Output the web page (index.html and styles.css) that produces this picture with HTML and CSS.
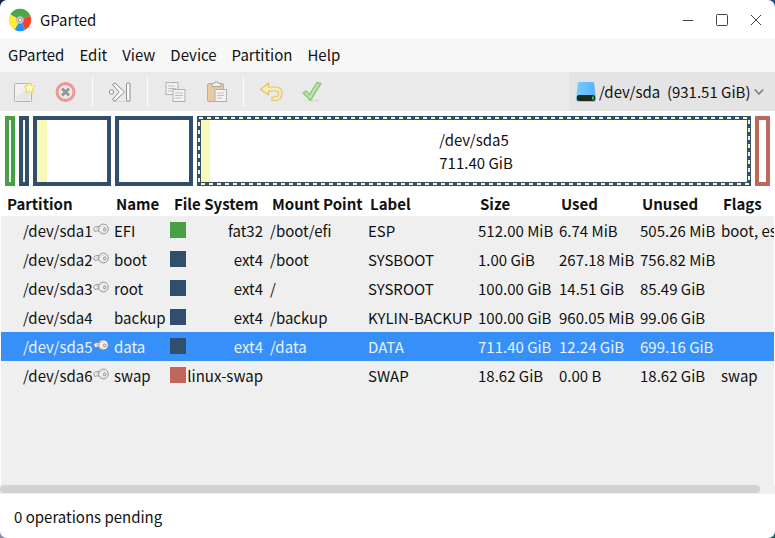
FILE: index.html
```html
<!DOCTYPE html>
<html lang="en">
<head>
<meta charset="utf-8">
<title>GParted</title>
<link rel="stylesheet" href="styles.css">
</head>
<body>
<svg class="defs" aria-hidden="true">
  <symbol id="key" viewBox="1 0 17 14">
    <path d="M10 4.500H4L1.600 6.700L3 9.500H4.500L5.500 8.500L7 9.500H10" fill="#f4f4f4" stroke="#8d8d8d"/>
    <circle cx="12" cy="7" r="5.200" fill="#f4f4f4" stroke="#8d8d8d"/>
    <circle cx="11" cy="7.300" r="3.400" fill="none" stroke="#d4d4d4"/>
    <circle cx="13.400" cy="7.500" r="1.500" fill="#e4e4e4" stroke="#8d8d8d"/>
    <path d="M4 6.500h5" stroke="#c4c4c4"/>
  </symbol>
</svg>
<div class="window">
  <header class="titlebar">
    <svg class="logo" width="24" height="24" viewBox="0 0 24 24" aria-hidden="true">
      <path d="M12 12L2.300 6.400A11.200 11.200 0 0 1 22.300 7.700Z" fill="#4aa84a"/>
      <path d="M12 12L22.300 7.700A11.200 11.200 0 0 1 17.500 21.800Z" fill="#f8402f"/>
      <path d="M12 12L17.500 21.800A11.200 11.200 0 0 1 6.500 21.800Z" fill="#2592f5"/>
      <path d="M12 12L6.500 21.800A11.200 11.200 0 0 1 2.300 6.400Z" fill="#ffe93b"/>
      <circle cx="12" cy="12" r="3.400" fill="#e8e8e8" stroke="#b5b0a8"/>
      <circle cx="12" cy="12" r="1.800" fill="#fff" stroke="#8f8f8f"/>
    </svg>
    <h1>GParted</h1>
    <div class="controls">
      <button type="button" aria-label="Minimize"><svg width="14" height="14" viewBox="0 0 14 14"><path d="M2 7.500h10" stroke="#444"/></svg></button>
      <button type="button" aria-label="Maximize"><svg width="14" height="14" viewBox="0 0 14 14"><rect x="1.500" y="1.500" width="11" height="11" rx="1" fill="none" stroke="#444"/></svg></button>
      <button type="button" aria-label="Close"><svg width="14" height="14" viewBox="0 0 14 14"><path d="M2 2l10 10M12 2L2 12" stroke="#444"/></svg></button>
    </div>
  </header>

  <nav class="menubar">
    <button type="button">GParted</button>
    <button type="button">Edit</button>
    <button type="button">View</button>
    <button type="button">Device</button>
    <button type="button">Partition</button>
    <button type="button">Help</button>
  </nav>

  <div class="toolbar">
    <button type="button" aria-label="New">
      <svg width="24" height="24" viewBox="0 0 24 24">
        <path d="M3 21.500h18" stroke="#d8d8d8"/>
        <rect x="2.500" y="3.500" width="17" height="18" rx="1" fill="#f1f1ef" stroke="#b2b2b0"/>
        <path d="M4 16.500l14-9v13H4z" fill="#e6e6e4"/>
        <path d="M17.500 2.500l1.900 3 3.600.9-2.400 2.700.3 3.600-3.400-1.400-3.400 1.400.3-3.600L12 6.400l3.600-.9z" fill="#fbf7c8" stroke="#efdf72" stroke-width="1.400" stroke-linejoin="round"/>
      </svg>
    </button>
    <button type="button" aria-label="Delete">
      <svg width="24" height="24" viewBox="0 0 24 24">
        <circle cx="12.500" cy="12" r="8.500" fill="#e9e9e8" stroke="#ec8a8a" stroke-width="2.800"/>
        <circle cx="12.500" cy="12" r="8.500" fill="none" stroke="#f3a6a6"/>
        <path d="M9 8.500l7 7M16 8.500l-7 7" stroke="#969696" stroke-width="2.800"/>
      </svg>
    </button>
    <span class="separator"></span>
    <button type="button" aria-label="Resize or move">
      <svg width="24" height="24" viewBox="0 0 24 24" fill="#f8f8f8" stroke="#8e8e8e" stroke-linejoin="round">
        <path d="M4 21.500h18" stroke="#d5d5d5"/>
        <path d="M4.500 4.500L7 3l9.500 9L7 21l-2.500-1.500L11 12z"/>
        <circle cx="3.500" cy="12" r="2.200"/>
        <rect x="18.500" y="3" width="3.500" height="18" rx="1"/>
      </svg>
    </button>
    <span class="separator"></span>
    <button type="button" aria-label="Copy">
      <svg width="24" height="24" viewBox="0 0 24 24" fill="#f2f2f1" stroke="#b0b0b0">
        <rect x="3" y="2.500" width="12" height="12"/>
        <path d="M5 6h7M5 8.500h8M5 11h5" stroke="#bfbfbf"/>
        <rect x="10" y="9.500" width="12" height="12"/>
        <path d="M12 13h8M12 15.500h8M12 18h6" stroke="#bfbfbf"/>
      </svg>
    </button>
    <button type="button" aria-label="Paste">
      <svg width="24" height="24" viewBox="0 0 24 24">
        <rect x="3.500" y="3.500" width="16" height="18" rx="1.500" fill="#e6cba3" stroke="#cfaa80"/>
        <path d="M8 6.500V3.500h2l1-1.500h3l1 1.500h2v3z" fill="#eee" stroke="#a5a5a5"/>
        <rect x="11" y="9.500" width="11.500" height="12" fill="#f3f3f2" stroke="#b0b0b0"/>
        <path d="M13 13h7M13 15.500h7M13 18h5" stroke="#bfbfbf"/>
      </svg>
    </button>
    <span class="separator"></span>
    <button type="button" aria-label="Undo">
      <svg width="24" height="24" viewBox="0 0 24 24">
        <path d="M1.500 9.500l8-6.500v4h7c4 0 6.500 2.500 6.500 6.500 0 4.500-3 7-7 7H13v-3.500h2.500c2.500 0 4-1.500 4-3.500s-1.300-2.500-3-2.500h-7v4z" fill="#faedb0" stroke="#dcc474" stroke-width="1.200" stroke-linejoin="round"/>
      </svg>
    </button>
    <button type="button" aria-label="Apply">
      <svg width="24" height="24" viewBox="0 0 24 24">
        <ellipse cx="12" cy="20.500" rx="8" ry="1.500" fill="#dfdfdf"/>
        <path d="M3 13l3-2 3.500 3.500L17 2.500l4 .8-10.500 17z" fill="#b9e5a4" stroke="#8cc47c" stroke-width="1.300" stroke-linejoin="round"/>
      </svg>
    </button>
    <div class="device">
      <svg width="20" height="20" viewBox="0 0 20 20" aria-hidden="true">
        <defs><linearGradient id="disk" x2="1"><stop stop-color="#79caff"/><stop offset=".6" stop-color="#62bbff"/><stop offset="1" stop-color="#5bb2fb"/></linearGradient></defs>
        <path d="M3.500 0h13q1.500 0 1.700 1.500L19.700 15v3q0 1.700-1.700 1.700H2Q.3 19.700.3 18v-3L1.800 1.500Q2 0 3.500 0z" fill="url(#disk)"/>
        <rect x=".8" y="13" width="18.400" height="6" rx="2.500" fill="#1d2a24"/>
        <rect x="16" y="14.500" width="1.800" height="3" fill="#35d04a"/>
      </svg>
      <select aria-label="Device"><option>/dev/sda&nbsp; (931.51 GiB)</option></select>
      <svg class="chevron" width="10" height="8" viewBox="0 0 10 8" aria-hidden="true"><path d="M.8 1.500L5 6l4.200-4.500" fill="none" stroke="#777" stroke-width="1.500"/></svg>
    </div>
  </div>

  <div class="map">
    <div class="part tiny fat"></div>
    <div class="part tiny ext"><div class="used" style="width:26%"></div></div>
    <div class="part mid ext"><div class="used" style="width:14.5%"></div></div>
    <div class="part mid ext"><div class="used" style="width:1%"></div></div>
    <div class="part large ext">
      <div class="used" style="width:1.7%"></div>
      <p>/dev/sda5<br>711.40 GiB</p>
      <svg class="selection" aria-hidden="true"><rect x="2" y="2"/></svg>
    </div>
    <div class="part small swap"></div>
  </div>

  <main class="list">
    <table>
      <colgroup><col class="c-part"><col class="c-name"><col class="c-fs"><col class="c-mount"><col class="c-label"><col class="c-num"><col class="c-num"><col class="c-num"><col class="c-flags"></colgroup>
      <thead>
        <tr><th>Partition</th><th>Name</th><th>File System</th><th>Mount Point</th><th>Label</th><th>Size</th><th>Used</th><th>Unused</th><th>Flags</th></tr>
      </thead>
      <tbody>
        <tr><td><div class="dev">/dev/sda1<svg><use href="#key"/></svg></div></td><td>EFI</td><td><div class="fs"><i class="swatch fat"></i>fat32</div></td><td>/boot/efi</td><td>ESP</td><td>512.00 MiB</td><td>6.74 MiB</td><td>505.26 MiB</td><td>boot, esp</td></tr>
        <tr><td><div class="dev">/dev/sda2<svg><use href="#key"/></svg></div></td><td>boot</td><td><div class="fs"><i class="swatch ext"></i>ext4</div></td><td>/boot</td><td>SYSBOOT</td><td>1.00 GiB</td><td>267.18 MiB</td><td>756.82 MiB</td><td></td></tr>
        <tr><td><div class="dev">/dev/sda3<svg><use href="#key"/></svg></div></td><td>root</td><td><div class="fs"><i class="swatch ext"></i>ext4</div></td><td>/</td><td>SYSROOT</td><td>100.00 GiB</td><td>14.51 GiB</td><td>85.49 GiB</td><td></td></tr>
        <tr><td><div class="dev">/dev/sda4</div></td><td>backup</td><td><div class="fs"><i class="swatch ext"></i>ext4</div></td><td>/backup</td><td>KYLIN-BACKUP</td><td>100.00 GiB</td><td>960.05 MiB</td><td>99.06 GiB</td><td></td></tr>
        <tr class="selected"><td><div class="dev">/dev/sda5<svg><use href="#key"/></svg></div></td><td>data</td><td><div class="fs"><i class="swatch ext"></i>ext4</div></td><td>/data</td><td>DATA</td><td>711.40 GiB</td><td>12.24 GiB</td><td>699.16 GiB</td><td></td></tr>
        <tr><td><div class="dev">/dev/sda6<svg><use href="#key"/></svg></div></td><td>swap</td><td><div class="fs"><i class="swatch swap"></i>linux-swap</div></td><td></td><td>SWAP</td><td>18.62 GiB</td><td>0.00 B</td><td>18.62 GiB</td><td>swap</td></tr>
      </tbody>
    </table>
  </main>
  <div class="scroll"><div class="thumb"></div></div>
  <footer class="status">0 operations pending</footer>
</div>
</body>
</html>
```
FILE: styles.css
```css
* {
  box-sizing: border-box;
}

body {
  margin: 0;
  background: conic-gradient(#1c4a86 25%, #0f7068 0 50%, #8d8ab0 0 75%, #16224e 0);
  color: #111;
  font: 15px/22px "Noto Sans CJK SC", "Noto Sans", sans-serif;
}

button,
select {
  margin: 0;
  padding: 0;
  border: 0;
  background: none;
  color: inherit;
  font: inherit;
}

.defs {
  position: absolute;
  width: 0;
  height: 0;
}

.window {
  display: flex;
  flex-direction: column;
  min-height: 100vh;
  border-radius: 7px;
  background: #fff;
  overflow: hidden;
}

.titlebar {
  display: flex;
  align-items: center;
  height: 38px;
  padding: 2px 2px 0 8px;
}

.titlebar h1 {
  margin: 0 0 0 8px;
  font-size: 15px;
  font-weight: 400;
}

.controls {
  display: flex;
  margin-left: auto;
}

.controls button {
  display: grid;
  place-items: center;
  width: 34px;
  height: 34px;
}

.menubar {
  display: flex;
  gap: 15px;
  height: 34px;
  padding-left: 8px;
  background: #f7f7f7;
}

.toolbar {
  display: flex;
  align-items: center;
  height: 39px;
  padding-left: 3px;
  background: #eaeaea;
}

.toolbar button {
  display: grid;
  place-items: center;
  width: 41px;
  height: 39px;
}

.separator {
  width: 1px;
  height: 31px;
  margin: 0 6px 0 7px;
  background: #fcfcfc;
}

.device {
  display: flex;
  align-items: center;
  align-self: stretch;
  gap: 3px;
  margin-left: auto;
  padding: 0 11px 0 7px;
  background: #e4e4e4;
}

.device select {
  appearance: none;
  height: 30px;
}

.map {
  display: flex;
  gap: 4px;
  height: 80px;
  padding: 5px;
}

.part {
  position: relative;
  display: flex;
  flex: 0 0 10px;
  border: 4px solid;
}

.part.small {
  flex-basis: 15px;
}

.part.mid {
  flex: 70 1 8px;
}

.part.large {
  flex: 546 1 8px;
}

.part.fat {
  border-color: #46a046;
}

.part.ext {
  border-color: #314e6c;
}

.part.swap {
  border-color: #c1665a;
}

.used {
  background: #f8f8ba;
}

.part p {
  flex: 1;
  margin: 0;
  align-self: center;
  line-height: 23px;
  padding-left: 229px;
}

.selection {
  position: absolute;
  top: -4px;
  left: -4px;
  width: calc(100% + 8px);
  height: calc(100% + 8px);
}

.selection rect {
  width: calc(100% - 4px);
  height: calc(100% - 4px);
  fill: none;
  stroke: #f8f8ba;
  stroke-width: 2px;
  stroke-dasharray: 4 4;
}

.list {
  flex: 1;
  margin: 0 1px;
  background: #efefef;
  overflow: hidden;
}

table {
  table-layout: fixed;
  width: 789px;
  border-collapse: collapse;
}

.c-part {
  width: 111px;
}

.c-name {
  width: 56px;
}

.c-fs {
  width: 100px;
}

.c-mount {
  width: 98px;
}

.c-label {
  width: 110px;
}

.c-num {
  width: 81px;
}

th {
  height: 25px;
  padding: 0 0 0 4px;
  background: #fff;
  text-align: left;
  white-space: nowrap;
}

th:first-child,
th:nth-child(3) {
  padding-left: 6px;
}

td {
  height: 29px;
  padding: 0 2px;
  white-space: nowrap;
}

.selected {
  background: #3790fa;
  color: #e9f2ff;
}

.dev {
  display: flex;
  align-items: center;
  padding-left: 20px;
}

.dev svg {
  width: 16px;
  height: 14px;
  margin-bottom: 4px;
}

.fs {
  display: flex;
  align-items: center;
  justify-content: space-between;
  padding-right: 3px;
}

.swatch {
  width: 16px;
  height: 16px;
  margin-bottom: 2px;
}

.swatch.fat {
  background: #46a046;
}

.swatch.ext {
  background: #314e6c;
}

.swatch.swap {
  background: #c1665a;
}

.scroll {
  height: 9px;
  background: #efefef;
}

.thumb {
  width: 98%;
  height: 8px;
  border-radius: 4px;
  background: #d2d2d2;
}

.status {
  height: 44px;
  padding: 0 14px;
  line-height: 46px;
}
```
